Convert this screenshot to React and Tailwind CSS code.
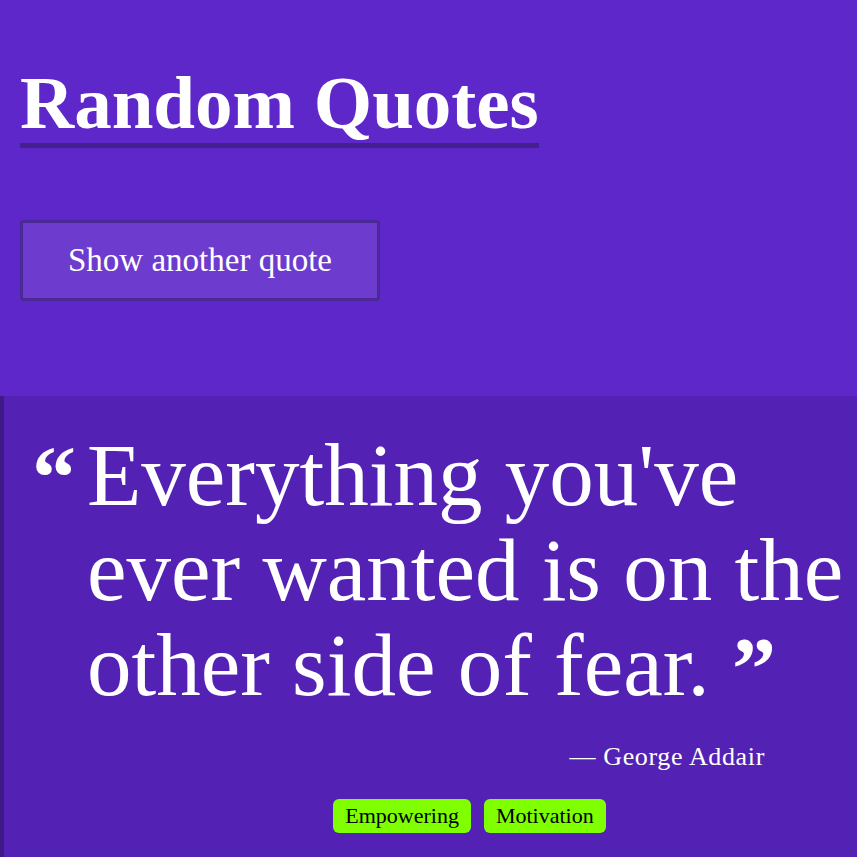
import React from 'react';

const serif = "font-['Liberation_Serif','DejaVu_Serif',serif]";

const Tag = ({ children }) => (
  <span className="bg-[#7fff00] text-black rounded-md px-3 h-[34px] flex items-center text-[22px] leading-none">
    {children}
  </span>
);

export default function App() {
  return (
    <div className={`min-h-[857px] bg-[#5d27c9] text-white ${serif} overflow-hidden`}>
      {/* Header */}
      <div className="px-5 pt-[65px] h-[396px]">
        <h1 className="inline-block text-[75px] font-bold leading-[76px] border-b-[5px] border-[#44208f] pb-[2px]">
          Random Quotes
        </h1>
        <div className="mt-[72px]">
          <button className="w-[360px] h-[81px] bg-[#6e3bcf] border-[3px] border-[#4b2a98] rounded-[3px] text-[33px] text-white">
            Show another quote
          </button>
        </div>
      </div>

      {/* Quote */}
      <div className="bg-[#5322b5] border-l-4 border-[#3d1a88] h-[461px] pt-[32px]">
        <div className="flex">
          <span className="w-[83px] shrink-0 pl-[28px] text-[88px] font-bold leading-none mt-[6px]">“</span>
          <p className="text-[89px] leading-[95px] whitespace-nowrap">
            Everything you've<br />
            ever wanted is on the<br />
            other side of fear.{' '}
            <span className="relative top-[3px] font-bold text-[88px] leading-none">”</span>
          </p>
        </div>
        <div className="flex justify-end pr-[92px] mt-[28px] text-[26px] leading-[32px] tracking-wide">
          — George Addair
        </div>
        <div className="flex justify-center gap-[13px] mt-[26px] pl-[78px]">
          <Tag>Empowering</Tag>
          <Tag>Motivation</Tag>
        </div>
      </div>
    </div>
  );
}
